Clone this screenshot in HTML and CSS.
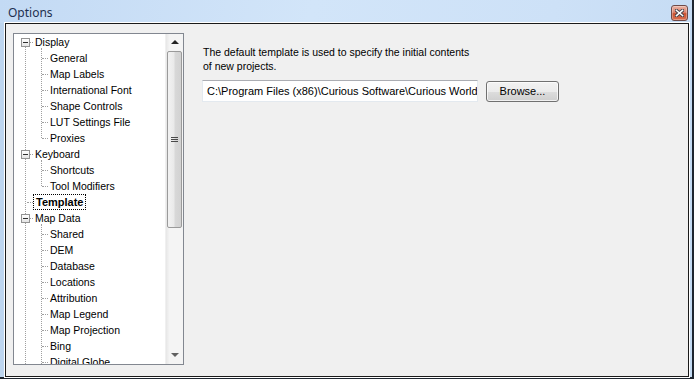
FILE: index.html
```html
<!DOCTYPE html>
<html lang="en">
<head>
    <meta charset="UTF-8">
    <title>Options</title>
    <link rel="stylesheet" href="styles.css">
</head>
<body>
    <div class="window">
        <div class="titlebar">
            <span class="title">Options</span>
            <button class="close" aria-label="Close">
                <svg width="9" height="8" viewBox="0 0 9 8">
                    <path d="M1.5 1.5 L7.5 6.5 M7.5 1.5 L1.5 6.5" stroke="#40404a" stroke-width="3.4" stroke-linecap="square" />
                    <path d="M1.5 1.5 L7.5 6.5 M7.5 1.5 L1.5 6.5" stroke="#ffffff" stroke-width="1.6" stroke-linecap="square" />
                </svg>
            </button>
        </div>

        <div class="content">
            <div class="tree-box">
                <div class="tree">
                    <div class="row root open">Display</div>
                    <div class="group">
                        <div class="row child">General</div>
                        <div class="row child">Map Labels</div>
                        <div class="row child">International Font</div>
                        <div class="row child">Shape Controls</div>
                        <div class="row child">LUT Settings File</div>
                        <div class="row child">Proxies</div>
                    </div>
                    <div class="row root open">Keyboard</div>
                    <div class="group">
                        <div class="row child">Shortcuts</div>
                        <div class="row child">Tool Modifiers</div>
                    </div>
                    <div class="row root leaf"><span class="selected">Template</span></div>
                    <div class="row root open">Map Data</div>
                    <div class="group open-end">
                        <div class="row child">Shared</div>
                        <div class="row child">DEM</div>
                        <div class="row child">Database</div>
                        <div class="row child">Locations</div>
                        <div class="row child">Attribution</div>
                        <div class="row child">Map Legend</div>
                        <div class="row child">Map Projection</div>
                        <div class="row child">Bing</div>
                        <div class="row child">Digital Globe</div>
                    </div>
                </div>
                <div class="scrollbar">
                    <div class="sb-btn"><span class="arrow up"></span></div>
                    <div class="sb-track">
                        <div class="sb-thumb"><span class="grip"></span></div>
                    </div>
                    <div class="sb-btn"><span class="arrow down"></span></div>
                </div>
            </div>

            <div class="panel">
                <p class="desc">The default template is used to specify the initial contents<br>of new projects.</p>
                <div class="path-row">
                    <div class="path-input">C:\Program Files (x86)\Curious Software\Curious World</div>
                    <button class="browse">Browse...</button>
                </div>
            </div>
        </div>
    </div>
</body>
</html>
```

FILE: styles.css
```css
body {
    margin: 0;
    width: 694px;
    height: 379px;
    overflow: hidden;
    background-color: #1e2630;
    font-family: 'Liberation Sans', Arial, sans-serif;
    font-size: 10.5px;
    color: #000;
}

.window {
    width: 692px;
    height: 377px;
    background: linear-gradient(90deg, #bdd5ef 0%, #cfe2f7 40%, #c4dbf3 100%);
    display: flex;
    flex-direction: column;
}

.titlebar {
    height: 23px;
    display: flex;
    align-items: flex-start;
    justify-content: space-between;
    background: linear-gradient(100deg, #c3daf4 0%, #d2e5f9 45%, #cde1f7 80%, #c6dcf4 100%);
}

.title {
    font-family: 'Noto Sans', 'Open Sans', sans-serif;
    font-size: 12px;
    color: #1e3050;
    padding: 5px 0 0 8px;
    line-height: 16px;
}

.close {
    margin: 5px 4px 0 0;
    width: 17px;
    height: 16px;
    padding: 0;
    border: 1px solid #6e4a48;
    border-radius: 3px;
    background: linear-gradient(180deg, #eab3a4 0%, #dc8570 45%, #c8502f 55%, #d87152 100%);
    display: flex;
    align-items: center;
    justify-content: center;
    box-shadow: inset 0 0 0 1px rgba(255, 255, 255, 0.3);
}

.content {
    margin: 0 3px 0 5px;
    height: 348px;
    border: 1px solid #1a1a1a;
    box-shadow: 0 0 0 1px #ffffff;
    background-color: #f0f0f0;
    display: flex;
    align-items: flex-start;
    padding: 9px 0 0 7px;
}

/* tree view */
.tree-box {
    width: 169px;
    height: 330px;
    border: 1px solid #828790;
    background-color: #fff;
    display: flex;
    overflow: hidden;
}

.tree {
    flex: 1;
    position: relative;
    overflow: hidden;
}

.tree::before {
    content: "";
    position: absolute;
    left: 11px;
    top: 8px;
    bottom: 0;
    border-left: 1px dotted #a0a0a0;
}

.row {
    height: 16px;
    line-height: 16px;
    position: relative;
    white-space: nowrap;
}

.root {
    padding-left: 21px;
}

.child {
    padding-left: 36px;
}

.row::before {
    content: "";
    position: absolute;
    top: 8px;
    border-top: 1px dotted #a0a0a0;
}

.root::before {
    left: 13px;
    width: 6px;
}

.child::before {
    left: 28px;
    width: 6px;
}

.open::after {
    content: "";
    position: absolute;
    left: 7px;
    top: 4px;
    width: 7px;
    height: 7px;
    border: 1px solid #939393;
    background:
        linear-gradient(#2f2f2f, #2f2f2f) center / 5px 1px no-repeat,
        linear-gradient(180deg, #ffffff 0%, #e4e4e4 100%);
}

.group {
    position: relative;
}

.group::before {
    content: "";
    position: absolute;
    left: 27px;
    top: -2px;
    bottom: 8px;
    border-left: 1px dotted #a0a0a0;
}

.group.open-end::before {
    bottom: 0;
}

.leaf .selected {
    font-weight: bold;
    font-size: 11px;
    outline: 1px dotted #000;
    outline-offset: -1px;
    padding: 0 3px;
    margin-left: -2px;
    display: inline-block;
    height: 16px;
}

/* scrollbar */
.scrollbar {
    width: 17px;
    display: flex;
    flex-direction: column;
    background: linear-gradient(90deg, #e6e6e6 0%, #f4f4f4 20%, #f4f4f4 100%);
    border-left: 1px solid #f0f0f0;
}

.sb-btn {
    height: 17px;
    display: flex;
    align-items: center;
    justify-content: center;
}

.arrow {
    width: 0;
    height: 0;
    border-left: 4px solid transparent;
    border-right: 4px solid transparent;
}

.arrow.up {
    border-bottom: 4px solid #222;
}

.arrow.down {
    border-top: 4px solid #606060;
}

.sb-track {
    flex: 1;
}

.sb-thumb {
    margin: 0 1px 0 1px;
    height: 175px;
    border: 1px solid #9a9a9a;
    border-radius: 2px;
    background: linear-gradient(90deg, #f2f2f2 0%, #eaeaea 45%, #d8d8d8 55%, #d2d2d2 100%);
    display: flex;
    align-items: center;
    justify-content: center;
}

.grip {
    width: 7px;
    height: 5px;
    background: repeating-linear-gradient(180deg, #4a4a4a 0 1px, transparent 1px 2px);
}

/* right panel */
.panel {
    margin-left: 19px;
    padding-top: 12px;
}

.desc {
    margin: 0;
    line-height: 14px;
}

.path-row {
    display: flex;
    align-items: flex-start;
    margin-top: 7px;
    margin-left: -1px;
}

.path-input {
    width: 270px;
    height: 20px;
    line-height: 20px;
    padding: 0 0 0 4px;
    background-color: #fff;
    border: 1px solid #e3e9ef;
    border-top-color: #abadb3;
    overflow: hidden;
    white-space: nowrap;
    font-size: 11px;
}

.browse {
    margin: 1px 0 0 8px;
    width: 73px;
    height: 21px;
    padding: 0;
    border: 1px solid #707070;
    border-radius: 3px;
    background: linear-gradient(180deg, #f2f2f2 0%, #ebebeb 50%, #dddddd 51%, #cfcfcf 100%);
    font-family: 'Liberation Sans', Arial, sans-serif;
    font-size: 11px;
    color: #000;
    box-shadow: inset 0 0 0 1px rgba(255, 255, 255, 0.7);
}
```
